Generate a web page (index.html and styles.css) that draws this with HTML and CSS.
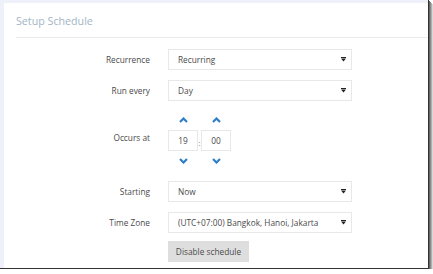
FILE: index.html
```html
<!DOCTYPE html>
<html>
<head>
<meta charset="utf-8">
<link rel="stylesheet" href="styles.css">
</head>
<body>
<div class="frame">
  <div class="panel">
    <div class="title">Setup Schedule</div>
    <div class="form">
      <div class="row">
        <div class="label">Recurrence</div>
        <div class="select"><span>Recurring</span><svg class="caret" width="5" height="5" viewBox="0 0 5 5"><rect x="0" y="0" width="5" height="1" fill="#222"/><polygon points="0,1.5 5,1.5 2.5,4.5" fill="#222"/></svg></div>
      </div>
      <div class="row">
        <div class="label">Run every</div>
        <div class="select"><span>Day</span><svg class="caret" width="5" height="5" viewBox="0 0 5 5"><rect x="0" y="0" width="5" height="1" fill="#222"/><polygon points="0,1.5 5,1.5 2.5,4.5" fill="#222"/></svg></div>
      </div>
      <div class="row time-row">
        <div class="label label-time">Occurs at</div>
        <div class="time">
          <div class="spin">
            <div class="arrow up"><svg width="9" height="6" viewBox="0 0 9 6"><polyline points="1,5 4.5,1.5 8,5" fill="none" stroke="#2f7fc8" stroke-width="2.2"/></svg></div>
            <div class="tbox">19</div>
            <div class="arrow down"><svg width="9" height="6" viewBox="0 0 9 6"><polyline points="1,1 4.5,4.5 8,1" fill="none" stroke="#2f7fc8" stroke-width="2.2"/></svg></div>
          </div>
          <div class="colon">:</div>
          <div class="spin">
            <div class="arrow up"><svg width="9" height="6" viewBox="0 0 9 6"><polyline points="1,5 4.5,1.5 8,5" fill="none" stroke="#2f7fc8" stroke-width="2.2"/></svg></div>
            <div class="tbox">00</div>
            <div class="arrow down"><svg width="9" height="6" viewBox="0 0 9 6"><polyline points="1,1 4.5,4.5 8,1" fill="none" stroke="#2f7fc8" stroke-width="2.2"/></svg></div>
          </div>
        </div>
      </div>
      <div class="row">
        <div class="label">Starting</div>
        <div class="select"><span>Now</span><svg class="caret" width="5" height="5" viewBox="0 0 5 5"><rect x="0" y="0" width="5" height="1" fill="#222"/><polygon points="0,1.5 5,1.5 2.5,4.5" fill="#222"/></svg></div>
      </div>
      <div class="row">
        <div class="label">Time Zone</div>
        <div class="select"><span>(UTC+07:00) Bangkok, Hanoi, Jakarta</span><svg class="caret" width="5" height="5" viewBox="0 0 5 5"><rect x="0" y="0" width="5" height="1" fill="#222"/><polygon points="0,1.5 5,1.5 2.5,4.5" fill="#222"/></svg></div>
      </div>
      <div class="row actions">
        <div class="label"></div>
        <div><button class="btn">Disable schedule</button></div>
      </div>
    </div>
  </div>
</div>
</body>
</html>
```
FILE: styles.css
```css
html, body {
  margin: 0;
  padding: 0;
  background: #fff;
}
body {
  font-family: "Open Sans", "Noto Sans", sans-serif;
  font-size: 8.3px;
  color: #4a4a4a;
}
.frame {
  box-sizing: border-box;
  width: 429px;
  height: 269px;
  background: #eef1f9;
  padding: 3px 0 0 4px;
  border-right: 1px solid #333;
  border-bottom: 1px solid #333;
  box-shadow: 1px 1px 0 #666, 2px 2px 0 #8a8a8a, 3px 3px 0 #b0b0b0, 4px 4px 0 #d8d8d8;
  display: flex;
}
.panel {
  flex: 1;
  background: #fff;
  display: flex;
  flex-direction: column;
}
.title {
  margin-left: 12px;
  padding: 9px 0 7px 0;
  font-size: 10.7px;
  line-height: 18px;
  color: #a3b5c7;
  border-bottom: 1px solid #ececec;
}
.form {
  display: flex;
  flex-direction: column;
  gap: 10px;
  padding-top: 11px;
}
.row {
  display: grid;
  grid-template-columns: 146px 184px;
  column-gap: 18px;
  align-items: center;
}
.actions {
  margin-top: -2px;
}
.label {
  text-align: right;
  font-size: 8.3px;
  color: #4a4a4a;
  line-height: 12px;
}
.select {
  box-sizing: border-box;
  height: 21px;
  border: 1px solid #e8e8e8;
  display: flex;
  align-items: center;
  justify-content: space-between;
  padding: 0 5px 0 9px;
  font-size: 8.3px;
  color: #4a4a4a;
  white-space: nowrap;
}
.caret {
  display: block;
}
.label-time {
  padding-bottom: 7px;
}
.time {
  display: flex;
  align-items: center;
}
.spin {
  display: flex;
  flex-direction: column;
  align-items: center;
  width: 30px;
}
.arrow {
  display: flex;
  justify-content: center;
  box-sizing: border-box;
  align-items: center;
}
.arrow.up {
  height: 19px;
  padding-bottom: 2px;
}
.arrow.down {
  height: 20px;
  padding-bottom: 1px;
}
.tbox {
  box-sizing: border-box;
  width: 30px;
  height: 21px;
  border: 1px solid #e8e8e8;
  display: flex;
  align-items: center;
  justify-content: center;
  font-size: 8.3px;
  color: #4a4a4a;
}
.colon {
  width: 3px;
  text-align: center;
  font-size: 8px;
  color: #777;
  margin-top: 2px;
}
.btn {
  font-family: "Open Sans", "Noto Sans", sans-serif;
  font-size: 8.3px;
  color: #4a4a4a;
  background: #dedede;
  border: none;
  height: 21px;
  width: 81px;
  padding: 0;
  display: block;
}
```
